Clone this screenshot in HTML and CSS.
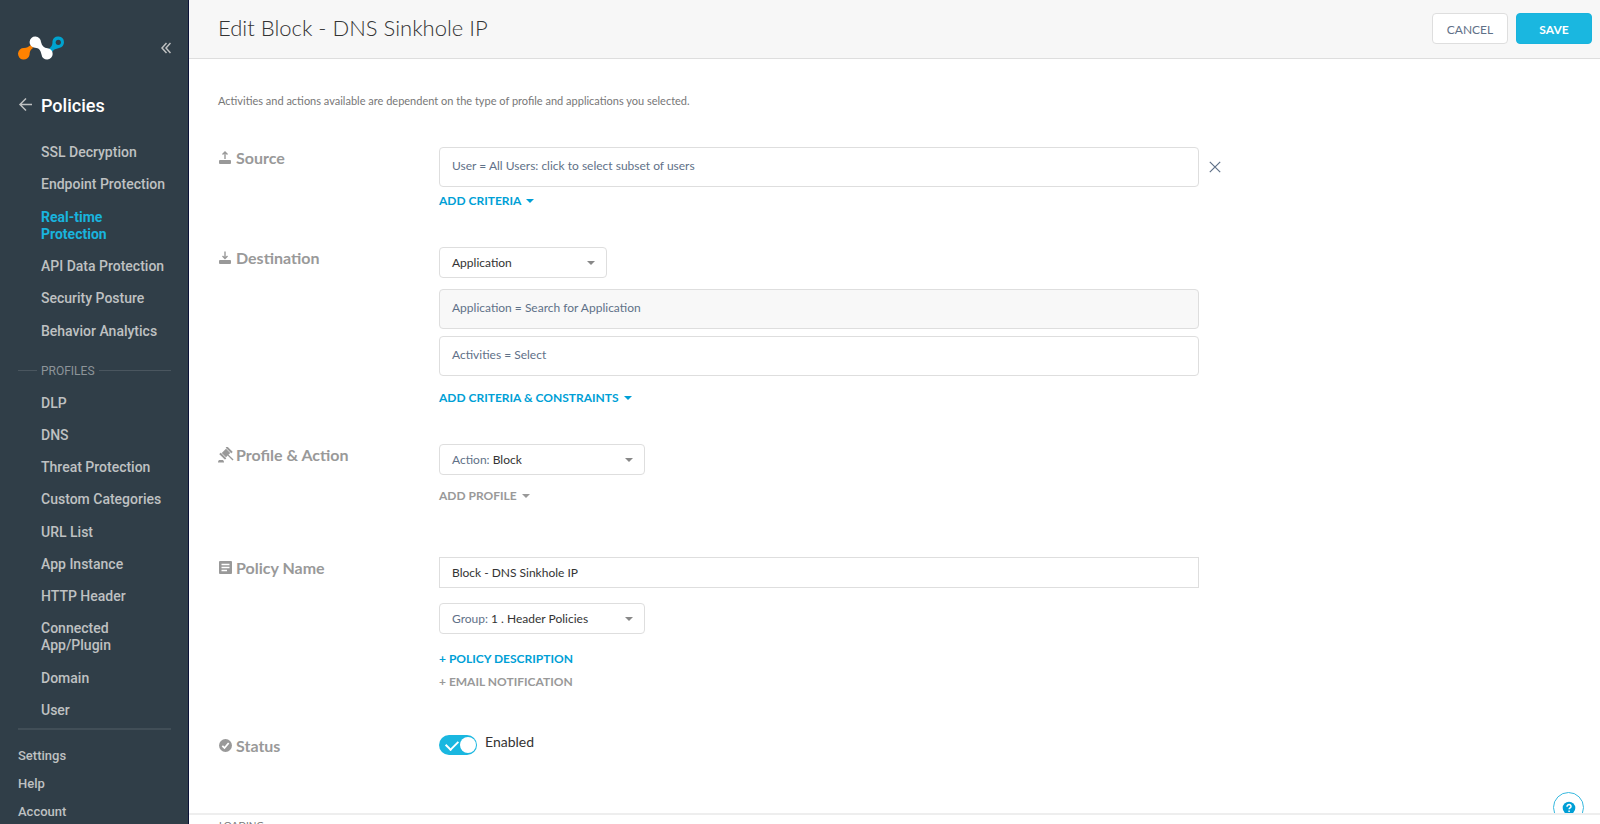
FILE: index.html
```html
<!DOCTYPE html>
<html lang="en">
<head>
<meta charset="utf-8">
<title>Edit Block - DNS Sinkhole IP</title>
<link rel="stylesheet" href="styles.css">
</head>
<body>
<div class="app">
  <aside class="sidebar">
    <div class="brand">
      <svg class="logo" viewBox="0 0 46 24" width="46" height="24" aria-label="Home">
        <path class="logo-orange" d="M13 9 L15 12 C11 15 12 17 11.500 19 A5.800 5.800 0 1 1 6 12 C9 12 10 11 13 9Z"/>
        <path class="logo-blue" d="M31 13 L34 16 C37 12 39 13 41 12 A5.800 5.800 0 1 0 34.500 5 C34.500 9 34 10 31 13Z"/>
        <path class="logo-white" d="M17.500 .5 A5.600 5.600 0 1 0 17 11.800 C21 12 22.500 14 23.500 18.500 A5.600 5.600 0 1 0 29.500 12.300 C26 12 24 10 23 6 A5.600 5.600 0 0 0 17.500 .5Z"/>
        <circle class="logo-hole" cx="40.300" cy="6.300" r="2.600"/>
      </svg>
      <button class="icon-button" type="button" aria-label="Collapse menu">
        <svg width="10" height="12" viewBox="0 0 10 12"><path class="collapse" d="M5.500 1 L1 6 L5.500 11 M9.500 1 L5 6 L9.500 11"/></svg>
      </button>
    </div>
    <a class="section" href="#">
      <svg width="14" height="16" viewBox="0 0 14 16"><path class="back" d="M14 6.500 H2 M8 .5 L2 6.500 L8 12.500"/></svg>
      <span>Policies</span>
    </a>
    <nav class="menu">
      <a href="#">SSL Decryption</a>
      <a href="#">Endpoint Protection</a>
      <a class="active" href="#">Real-time<br>Protection</a>
      <a href="#">API Data Protection</a>
      <a href="#">Security Posture</a>
      <a href="#">Behavior Analytics</a>
    </nav>
    <div class="divider"><span>PROFILES</span></div>
    <nav class="menu profiles">
      <a href="#">DLP</a>
      <a href="#">DNS</a>
      <a href="#">Threat Protection</a>
      <a href="#">Custom Categories</a>
      <a href="#">URL List</a>
      <a href="#">App Instance</a>
      <a href="#">HTTP Header</a>
      <a href="#">Connected<br>App/Plugin</a>
      <a href="#">Domain</a>
      <a href="#">User</a>
    </nav>
    <nav class="account">
      <a href="#">Settings</a>
      <a href="#">Help</a>
      <a href="#">Account</a>
    </nav>
  </aside>
  <div class="page">
    <header class="topbar">
      <h1>Edit Block - DNS Sinkhole IP</h1>
      <div class="actions">
        <button class="button" type="button">CANCEL</button>
        <button class="button primary" type="button">SAVE</button>
      </div>
    </header>
    <main class="content">
      <p class="intro">Activities and actions available are dependent on the type of profile and applications you selected.</p>

      <section class="row source">
        <h2>
          <svg width="16" height="16" viewBox="0 0 16 16"><rect x="1" y="10" width="12" height="4" rx="1"/><path class="thin" d="M7 9 V2 M4.500 4.500 L7 2 L9.500 4.500"/></svg>
          Source
        </h2>
        <div class="fields">
          <div class="criteria">
            <button class="box" type="button">User = All Users: click to select subset of users</button>
            <button class="icon-button" type="button" aria-label="Remove">
              <svg width="12" height="12" viewBox="0 0 12 12"><path class="cross" d="M.8 .8 L11.200 11.200 M11.200 .8 L.8 11.200"/></svg>
            </button>
          </div>
          <button class="link" type="button">ADD CRITERIA <i class="caret"></i></button>
        </div>
      </section>

      <section class="row destination">
        <h2>
          <svg width="16" height="16" viewBox="0 0 16 16"><rect x="1" y="10" width="12" height="4" rx="1"/><path class="thin" d="M7 1.500 V8.500 M4.500 6 L7 8.500 L9.500 6"/></svg>
          Destination
        </h2>
        <div class="fields">
          <button class="dropdown short" type="button"><span>Application</span><i class="caret"></i></button>
          <div class="boxes">
            <button class="box muted" type="button">Application = Search for Application</button>
            <button class="box" type="button">Activities = Select</button>
          </div>
          <button class="link" type="button">ADD CRITERIA &amp; CONSTRAINTS <i class="caret"></i></button>
        </div>
      </section>

      <section class="row profile">
        <h2>
          <svg width="16" height="16" viewBox="0 0 16 16"><path d="M0 15.500 V14.500 L1 13 H5 L6 14.500 V15.500Z"/><g transform="translate(8 6) rotate(-45)"><rect x="-5.500" y="-4" width="2" height="8" rx=".5"/><rect x="3.500" y="-4" width="2" height="8" rx=".5"/><rect x="-3" y="-3" width="6" height="6"/><rect x="-.7" y="3" width="1.400" height="7"/></g></svg>
          Profile &amp; Action
        </h2>
        <div class="fields">
          <button class="dropdown" type="button"><span><span class="key">Action:</span> Block</span><i class="caret"></i></button>
          <button class="link gray" type="button">ADD PROFILE <i class="caret"></i></button>
        </div>
      </section>

      <section class="row name">
        <h2>
          <svg width="16" height="16" viewBox="0 0 16 16"><rect x="1" y="1" width="13" height="13" rx="1"/><path class="rule" d="M3.500 4.500 H11.500 M3.500 7.500 H11.500 M3.500 10.500 H9"/></svg>
          <label for="policy-name">Policy Name</label>
        </h2>
        <div class="fields">
          <input class="text" id="policy-name" type="text" value="Block - DNS Sinkhole IP">
          <button class="dropdown" type="button"><span><span class="key">Group:</span> 1 . Header Policies</span><i class="caret"></i></button>
          <div class="links">
            <button class="link" type="button">+ POLICY DESCRIPTION</button>
            <button class="link gray" type="button">+ EMAIL NOTIFICATION</button>
          </div>
        </div>
      </section>

      <section class="row">
        <h2>
          <svg width="16" height="16" viewBox="0 0 16 16"><circle cx="7.500" cy="7.500" r="6.500"/><path class="tick" d="M4.300 7.800 L6.500 10 L10.700 5"/></svg>
          Status
        </h2>
        <div class="fields">
          <label class="toggle"><input type="checkbox" role="switch" checked><span>Enabled</span></label>
        </div>
      </section>
    </main>
    <button class="help" type="button" aria-label="Help">
      <svg width="14" height="14" viewBox="0 0 14 14"><circle cx="7" cy="7" r="6.300"/><path d="M5 5.700 C5 2.800 9.300 3 9 5.600 C8.800 6.900 7.100 6.800 7.100 8.300 M7.100 9.600 V11"/></svg>
    </button>
    <footer class="loading">LOADING</footer>
  </div>
</div>
</body>
</html>
```
FILE: styles.css
```css
* { box-sizing: border-box; }

body {
  margin: 0;
  background: #fff;
  color: #333;
  font: 12px/20px Lato, sans-serif;
}

button, input { font: inherit; color: inherit; }
button { cursor: pointer; }
a { color: inherit; text-decoration: none; }

.app { display: flex; height: 100vh; overflow: hidden; }

/* Sidebar */
.sidebar {
  display: flex;
  flex: 0 0 189px;
  flex-direction: column;
  padding: 36px 17px 4px 18px;
  background: #303e48;
  border-right: 1px solid #0c1238;
  color: #bfc1c2;
  font: 500 14px/17px Roboto, sans-serif;
  overflow: hidden;
}
.brand { display: flex; align-items: center; justify-content: space-between; height: 24px; }
.logo-orange { fill: #ff8200; }
.logo-white { fill: #fff; }
.logo-blue { fill: #00a3cf; }
.logo-hole { fill: #303e48; }
.icon-button { display: flex; padding: 0; border: 0; background: none; }
.collapse, .back, .cross { fill: none; stroke: #bfc1c2; stroke-width: 1.5; }
.cross { stroke: #5f7188; stroke-width: 1.2; }

.section {
  display: flex;
  align-items: center;
  gap: 9px;
  margin: 36px 0 28px;
  color: #fff;
  font-size: 18px;
  line-height: 20px;
}
.menu {
  display: flex;
  flex: 2 0 auto;
  flex-direction: column;
  justify-content: space-between;
  gap: 15px;
  padding-left: 23px;
  white-space: nowrap;
}
.profiles { flex-grow: 3; }
.menu .active { color: #19b3dd; font-weight: 700; }
.divider { display: flex; align-items: center; gap: 4px; margin: 23px 0 16px; color: #8d9499; font-size: 12px; font-weight: 400; line-height: 16px; }
.divider::before, .divider::after { content: ""; flex: 1; height: 1px; background: #4a565f; }
.divider::before { flex: 0 0 19px; }
.account {
  display: flex;
  flex-direction: column;
  gap: 12px;
  margin-top: 9px;
  padding-top: 18px;
  border-top: 2px solid #414e57;
  font-size: 13px;
  line-height: 16px;
}

/* Page */
.page { display: flex; flex: 1; flex-direction: column; min-width: 0; position: relative; }
.topbar {
  display: flex;
  align-items: center;
  justify-content: space-between;
  height: 59px;
  padding: 0 8px 1px 29px;
  background: #f7f7f7;
  border-bottom: 1px solid #dedede;
}
h1 { margin: 0; padding-bottom: 2px; font-size: 22px; font-weight: 300; line-height: 30px; }
.actions { display: flex; gap: 8px; }
.button {
  width: 76px;
  height: 31px;
  padding: 2px 0 0;
  border: 1px solid #dedede;
  border-radius: 4px;
  background: #fff;
  color: #5f7188;
}
.primary { border-color: #19b3dd; background: #1ab7e0; color: #fff; font-weight: 700; }

.content { flex: 1; padding: 32px 26px 0 29px; }
.intro { margin: 0 0 36px; color: #777; font-size: 11px; }
.row { display: grid; grid-template-columns: 221px minmax(0, 1fr); }
.source { margin-bottom: 36px; }
.destination { margin-bottom: 36px; }
.profile { margin-bottom: 51px; }
.name { margin-bottom: 43px; }
h2 {
  display: flex;
  align-items: center;
  align-self: start;
  gap: 2px;
  margin: 1px 0 0;
  color: #999;
  font-size: 16px;
  font-weight: 700;
  line-height: 20px;
}
h2 svg { fill: #999; flex: none; }
.thin { fill: none; stroke: #999; stroke-width: 1.4; }
.rule, .tick { fill: none; stroke: #fff; stroke-width: 1.4; }
.tick { stroke-width: 1.8; }

.fields { display: flex; flex-direction: column; align-items: flex-start; }
.criteria { display: flex; align-items: center; gap: 10px; width: 100%; }
.boxes { display: flex; flex-direction: column; gap: 7px; width: 100%; margin: 11px 0 12px; }
.box {
  width: 67%;
  height: 40px;
  padding: 0 12px 2px;
  border: 1px solid #dedede;
  border-radius: 4px;
  background: #fff;
  color: #5f7188;
  text-align: left;
}
.muted { background: #f8f8f8; }
.link {
  display: flex;
  align-items: center;
  gap: 5px;
  padding: 0;
  border: 0;
  background: none;
  color: #009fd6;
  font-weight: 700;
}
.criteria + .link { margin-top: 4px; }
.gray { color: #999; }
.caret { border: 4px solid transparent; border-top: 4px solid; border-bottom: 0; }

.dropdown {
  display: flex;
  align-items: center;
  justify-content: space-between;
  width: 206px;
  height: 31px;
  padding: 0 11px 0 12px;
  border: 1px solid #dedede;
  border-radius: 4px;
  background: #fff;
}
.dropdown .caret { color: #888; }
.short { width: 168px; }
.key { color: #5f7188; }
.dropdown + .link { margin-top: 11px; }
.text { width: 67%; height: 31px; margin-bottom: 15px; padding: 0 12px; border: 1px solid #dedede; }
.links { display: flex; flex-direction: column; gap: 3px; margin-top: 15px; }

.toggle { display: flex; gap: 8px; font-size: 14px; line-height: 14px; }
.toggle input {
  appearance: none;
  width: 38px;
  height: 20px;
  margin: 0;
  border-radius: 10px;
  background: #1ab7e0;
  position: relative;
}
.toggle input::before {
  content: "";
  position: absolute;
  top: 2px;
  right: 1px;
  width: 16px;
  height: 16px;
  border-radius: 50%;
  background: #fff;
}
.toggle input::after {
  content: "";
  position: absolute;
  top: 5px;
  left: 7px;
  width: 10px;
  height: 6px;
  border: solid #fff;
  border-width: 0 0 2px 2px;
  rotate: -45deg;
}

.help {
  display: flex;
  align-items: center;
  justify-content: center;
  position: absolute;
  right: 16px;
  bottom: 1px;
  width: 31px;
  height: 31px;
  padding: 0;
  border: 1px solid #38b9df;
  border-radius: 50%;
  background: #fff;
}
.help svg { flex: none; }
.help circle { fill: #009fd6; }
.help path { fill: none; stroke: #fff; stroke-width: 1.5; }
.loading {
  height: 11px;
  padding: 0 30px;
  border-top: 2px solid #eee;
  background: #fff;
  color: #777;
  font-size: 10px;
  line-height: 20px;
  overflow: hidden;
  z-index: 1;
}
```
